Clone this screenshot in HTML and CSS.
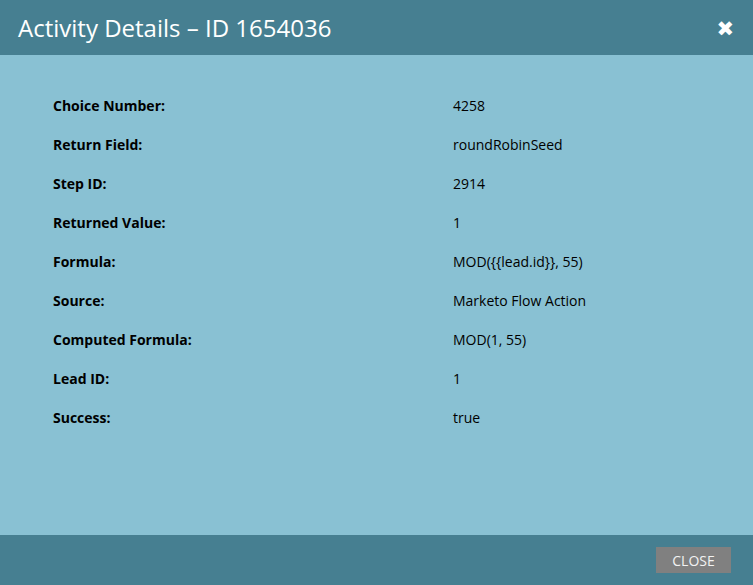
FILE: index.html
```html
<!DOCTYPE html>
<html lang="en">
<head>
    <meta charset="UTF-8">
    <title>Activity Details</title>
    <link rel="stylesheet" href="styles.css">
</head>
<body>

    <div class="dialog">

        <div class="dialog-header">
            <h1 class="dialog-title">Activity Details &ndash; ID 1654036</h1>
            <span class="close-icon">&#10006;</span>
        </div>

        <div class="dialog-body">
            <div class="detail-row"><span class="detail-label">Choice Number:</span><span>4258</span></div>
            <div class="detail-row"><span class="detail-label">Return Field:</span><span>roundRobinSeed</span></div>
            <div class="detail-row"><span class="detail-label">Step ID:</span><span>2914</span></div>
            <div class="detail-row"><span class="detail-label">Returned Value:</span><span>1</span></div>
            <div class="detail-row"><span class="detail-label">Formula:</span><span>MOD({{lead.id}}, 55)</span></div>
            <div class="detail-row"><span class="detail-label">Source:</span><span>Marketo Flow Action</span></div>
            <div class="detail-row"><span class="detail-label">Computed Formula:</span><span>MOD(1, 55)</span></div>
            <div class="detail-row"><span class="detail-label">Lead ID:</span><span>1</span></div>
            <div class="detail-row"><span class="detail-label">Success:</span><span>true</span></div>
        </div>

        <div class="dialog-footer">
            <button class="close-button">CLOSE</button>
        </div>

    </div>

</body>
</html>
```

FILE: styles.css
```css
body{
    margin: 0;
    font-family: "Open Sans", "DejaVu Sans", sans-serif;
    background-color: #89c1d3;
}

.dialog{
    display: flex;
    flex-direction: column;
    height: 585px;
}

.dialog-header{
    height: 55px;
    background-color: #467f91;
    display: flex;
    align-items: center;
    justify-content: space-between;
    padding: 0 19px 0 18px;
}

.dialog-title{
    margin: 0;
    color: #ffffff;
    font-size: 24px;
    font-weight: normal;
}

.close-icon{
    color: #ffffff;
    font-size: 21px;
    font-weight: bold;
}

.dialog-body{
    flex: 1;
    padding: 31px 53px;
    color: #000000;
    font-size: 14px;
}

.detail-row{
    display: grid;
    grid-template-columns: 400px auto;
    line-height: 39px;
}

.detail-label{
    font-weight: bold;
}

.dialog-footer{
    height: 50px;
    background-color: #467f91;
    display: flex;
    align-items: center;
    justify-content: flex-end;
    padding: 0 22px;
}

.close-button{
    width: 75px;
    height: 26px;
    border: none;
    background-color: #808080;
    color: #f2f2f2;
    font-family: "Open Sans", "DejaVu Sans", sans-serif;
    font-size: 14px;
    padding: 0;
}
```
